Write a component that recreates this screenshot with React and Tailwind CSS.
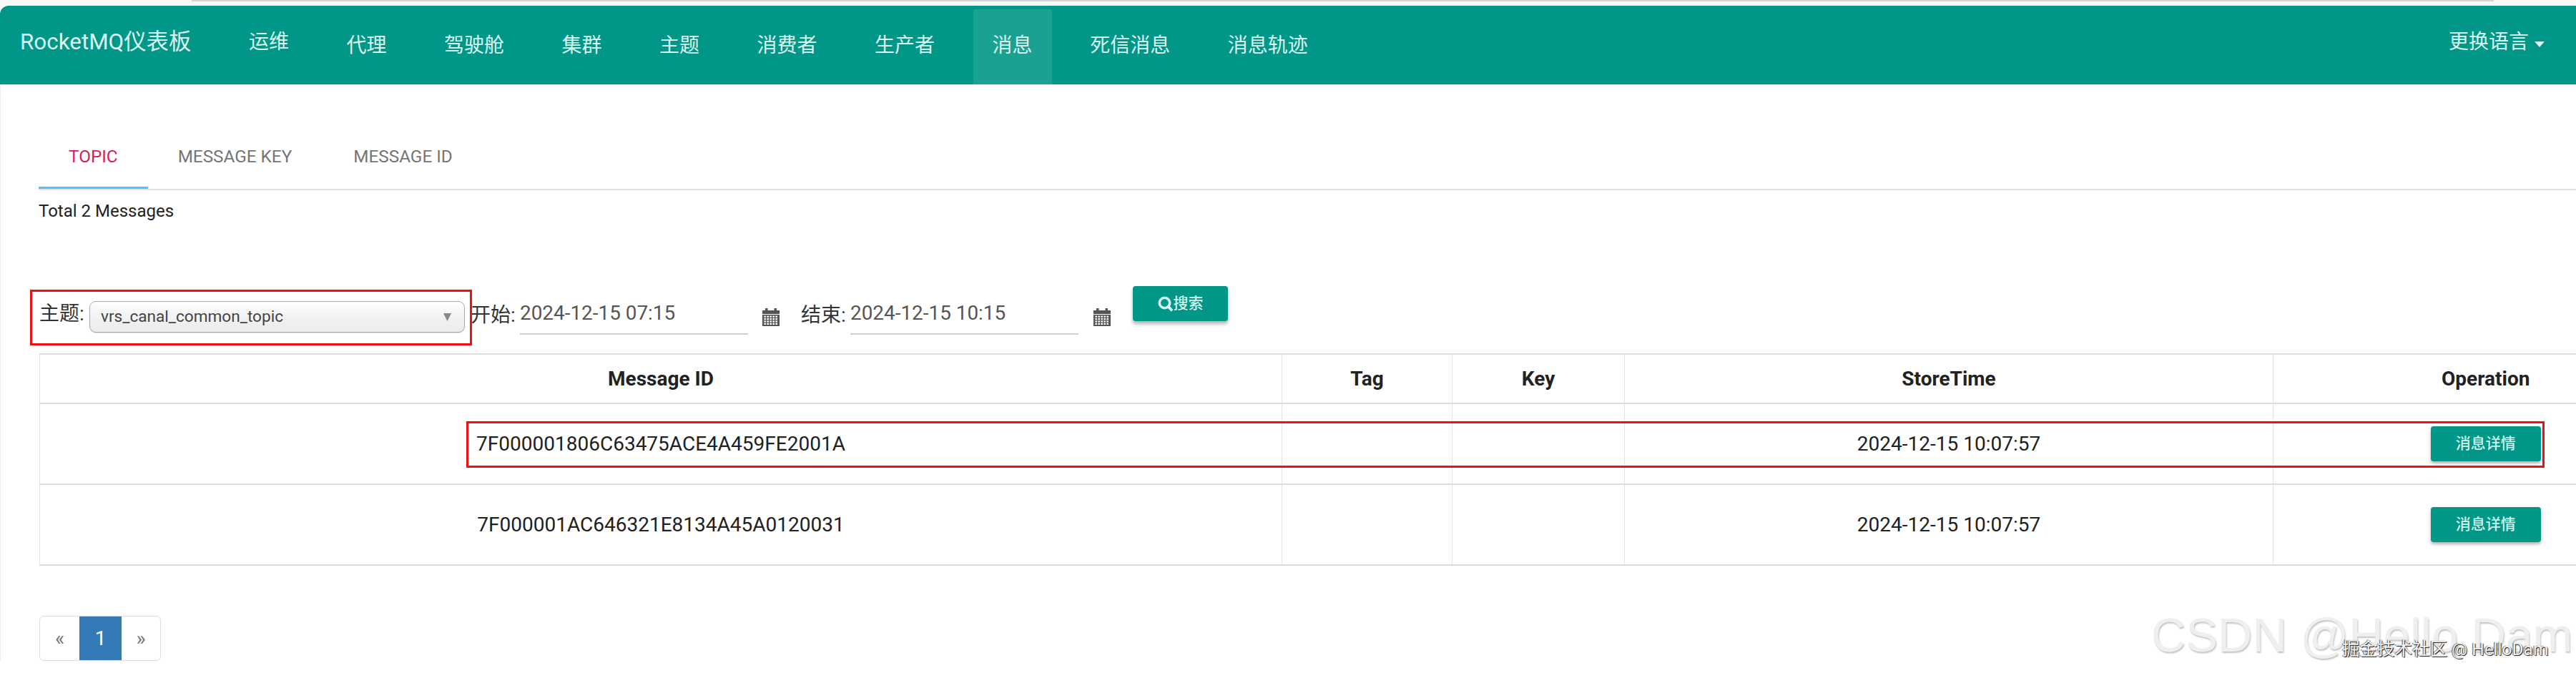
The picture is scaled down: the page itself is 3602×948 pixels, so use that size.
const FONT = "font-['Roboto','Noto_Sans_CJK_SC',sans-serif]";

function Calendar() {
  const cells = [];
  for (let r = 0; r < 4; r++) {
    for (let c = 0; c < 5; c++) {
      cells.push(<rect key={`${r}-${c}`} x={2.4 + c * 4} y={10.6 + r * 3.4} width="2.6" height="2.2" fill="#fff" />);
    }
  }
  return (
    <svg viewBox="0 0 24 25" className="w-[24px] h-[25px] block">
      <rect x="0" y="3" width="24" height="22" fill="#555" />
      <rect x="4" y="0" width="3.5" height="5" fill="#555" />
      <rect x="16.5" y="0" width="3.5" height="5" fill="#555" />
      <rect x="0" y="8" width="24" height="1" fill="#fff" />
      {cells}
    </svg>
  );
}

function SearchGlyph() {
  return (
    <svg viewBox="0 0 22 22" className="w-[22px] h-[22px] block">
      <circle cx="9.5" cy="9.5" r="7.2" fill="none" stroke="#d9f7f1" strokeWidth="3.6" />
      <path d="M14.5 14.5 L20 20.5" stroke="#d9f7f1" strokeWidth="4" />
    </svg>
  );
}

function NavItem({ label, active, raised }) {
  return (
    <div className={`px-[27px] h-full flex items-center ${active ? "bg-[#1aa191]" : ""} ${raised ? "pb-[13px]" : "pb-[3px]"}`}>
      <span>{label}</span>
    </div>
  );
}

function DateField({ value }) {
  return (
    <div className="mt-[22px] ml-[6px] w-[319px] h-[46px] border-b-2 border-[#cfcfcf] text-[#555] text-[27.9px] leading-[32px]">
      {value}
    </div>
  );
}

function Row({ id, time }) {
  return (
    <tr className="h-[113px] border-b-2 border-[#dddddd]">
      <td className="border-r border-l border-[#e4e4e4] text-center text-[#212121]">{id}</td>
      <td className="border-r border-[#e4e4e4]"></td>
      <td className="border-r border-[#e4e4e4]"></td>
      <td className="border-r border-[#e4e4e4] text-center text-[#212121]">{time}</td>
      <td className="text-center">
        <button className="inline-block align-middle w-[154px] h-[49px] rounded-[4px] bg-[#009688] text-[#d0f5ec] text-[21px] font-medium shadow-[0_3px_4px_rgba(0,0,0,0.3)]">
          消息详情
        </button>
      </td>
    </tr>
  );
}

export default function App() {
  return (
    <div className={`${FONT} relative w-[3602px] h-[948px] overflow-hidden bg-white text-[28px] text-[#333]`}>
      <div className="h-[8px] bg-[#f7f7f7]">
        <div className="ml-[268px] w-[3219px] h-[2px] bg-[#d4d4d4]"></div>
      </div>

      <header className="h-[110px] bg-[#009688] rounded-tl-[12px] flex items-stretch text-[#dcf8f2] text-[28px]">
        <div className="pl-[28px] w-[321px] flex items-center pb-[8px] text-[31.4px] whitespace-nowrap">RocketMQ仪表板</div>
        <nav className="flex items-stretch gap-[26.5px] pt-[5px] whitespace-nowrap">
          <NavItem label="运维" raised />
          <NavItem label="代理" />
          <NavItem label="驾驶舱" />
          <NavItem label="集群" />
          <NavItem label="主题" />
          <NavItem label="消费者" />
          <NavItem label="生产者" />
          <NavItem label="消息" active />
          <NavItem label="死信消息" />
          <NavItem label="消息轨迹" />
        </nav>
        <div className="ml-auto pr-[44px] flex items-center gap-[8px] pb-[8px]">
          <span>更换语言</span>
          <svg viewBox="0 0 14 8" className="w-[14px] h-[8px] mt-[6px]">
            <path d="M0 0 H14 L7 8 Z" fill="#dcf8f2" />
          </svg>
        </div>
      </header>

      <main className="border-l border-[#eeeeee]">
        <div className="ml-[53px] h-[148px] flex items-end border-b-2 border-[#e0e0e0] text-[24.3px] text-[#757575]">
          <div className="px-[42px] h-[92px] pt-[31px] leading-[32px] border-b-[3px] border-[#4fc3f7] text-[#d81b60]">TOPIC</div>
          <div className="pl-[42px] pr-[44px] h-[92px] pt-[31px] leading-[32px]">MESSAGE KEY</div>
          <div className="px-[42px] h-[92px] pt-[31px] leading-[32px]">MESSAGE ID</div>
        </div>

        <div className="ml-[53px] mt-[13px] text-[24px] leading-[32px] text-[#222]">Total 2 Messages</div>

        <div className="mt-[89px] ml-[54px] h-[52px] flex items-start">
          <div className="mt-[23px] leading-[32px] w-[63px]">主题:</div>
          <div className="mt-[21px] ml-[7px] w-[525px] h-[44px] rounded-[9px] border border-[#aaaaaa] bg-gradient-to-b from-white via-[#f2f2f2] to-[#ececec] shadow-[0_1px_1px_rgba(0,0,0,0.15)] flex items-center justify-between pl-[15px] pr-[18px] text-[22.6px] text-[#444]">
            <span>vrs_canal_common_topic</span>
            <svg viewBox="0 0 11 11" className="w-[11px] h-[11px]">
              <path d="M0 0 H11 L5.5 11 Z" fill="#888888" />
            </svg>
          </div>
          <div className="mt-[25px] ml-[8px] leading-[32px] w-[63px]">开始:</div>
          <DateField value="2024-12-15 07:15" />
          <div className="mt-[31px] ml-[20px]"><Calendar /></div>
          <div className="mt-[25px] ml-[30px] leading-[32px] w-[63px]">结束:</div>
          <DateField value="2024-12-15 10:15" />
          <div className="mt-[31px] ml-[21px]"><Calendar /></div>
          <button className="ml-[31px] w-[133px] h-[49px] rounded-[4px] bg-[#009688] text-[#d9f7f1] text-[21px] font-medium flex items-center justify-center shadow-[0_4px_5px_rgba(0,0,0,0.3)]">
            <SearchGlyph />
            <span>搜索</span>
          </button>
        </div>

        <table className="ml-[54px] mt-[42px] w-[3717px] table-fixed border-collapse">
          <colgroup>
            <col className="w-[1737px]" />
            <col className="w-[238px]" />
            <col className="w-[241px]" />
            <col className="w-[907px]" />
            <col className="w-[594px]" />
          </colgroup>
          <thead>
            <tr className="h-[69px] border-t-2 border-b-2 border-[#dddddd] text-[28px] font-bold text-[#222]">
              <th className="border-r border-l border-[#e4e4e4]">Message ID</th>
              <th className="border-r border-[#e4e4e4]">Tag</th>
              <th className="border-r border-[#e4e4e4]">Key</th>
              <th className="border-r border-[#e4e4e4]">StoreTime</th>
              <th>Operation</th>
            </tr>
          </thead>
          <tbody>
            <Row id="7F000001806C63475ACE4A459FE2001A" time="2024-12-15 10:07:57" />
            <Row id="7F000001AC646321E8134A45A0120031" time="2024-12-15 10:07:57" />
          </tbody>
        </table>

        <div className="ml-[54px] mt-[70px] w-[170px] h-[63px] flex rounded-[6px] border border-[#dddddd] overflow-hidden">
          <div className="w-[55px] flex items-center justify-center text-[#777] text-[28px]">«</div>
          <div className="w-[59px] flex items-center justify-center bg-[#337ab7] text-white">1</div>
          <div className="flex-1 flex items-center justify-center text-[#777] text-[28px]">»</div>
        </div>
      </main>

      {/* red annotation frames drawn over the screenshot */}
      <div className="absolute left-[42px] top-[405px] w-[618px] h-[78px] border-[3px] border-[#f01010]"></div>
      <div className="absolute left-[652px] top-[589px] w-[2906px] h-[65px] border-[3px] border-[#f01010]"></div>

      {/* watermarks */}
      <div className="absolute left-[3008px] top-[848px] font-['Liberation_Sans',sans-serif] text-[67px] leading-[80px] whitespace-nowrap text-[#efefef] [text-shadow:1px_2px_2px_#c4c4c4]">
        CSDN @Hello Dam
      </div>
      <div className="absolute left-[3275px] top-[892px] text-[24.5px] leading-[32px] whitespace-nowrap text-[#f4f4f4] [text-shadow:1px_1px_1px_#111,-1px_0_1px_#555]">
        掘金技术社区 @ HelloDam
      </div>
    </div>
  );
}
